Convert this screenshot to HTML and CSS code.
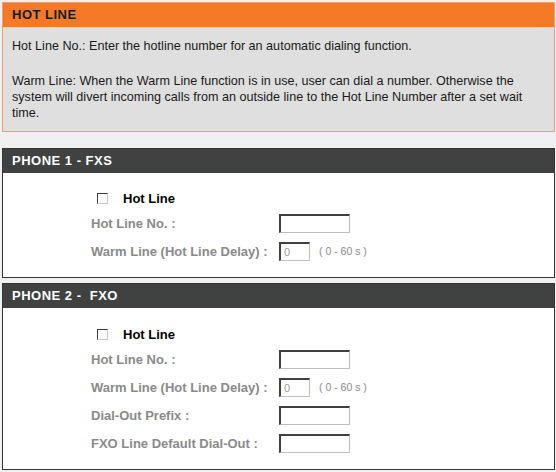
FILE: index.html
```html
<!DOCTYPE html>
<html>
<head>
<meta charset="utf-8">
<link rel="stylesheet" href="styles.css">
</head>
<body>
<div class="page">
  <section class="box info">
    <h2 class="head head-orange">HOT LINE</h2>
    <div class="info-body">
      <p>Hot Line No.: Enter the hotline number for an automatic dialing function.</p>
      <p>Warm Line: When the Warm Line function is in use, user can dial a number. Otherwise the system will divert incoming calls from an outside line to the Hot Line Number after a set wait time.</p>
    </div>
  </section>

  <section class="box phone phone1">
    <h2 class="head head-dark">PHONE 1 - FXS</h2>
    <div class="form">
      <div class="check-row"><span class="checkbox"></span><span class="check-label">Hot Line</span></div>
      <div class="row"><span class="label">Hot Line No. :</span><span class="field"><span class="input"></span></span></div>
      <div class="row"><span class="label">Warm Line (Hot Line Delay) :</span><span class="field"><span class="input small">0</span><span class="hint">( 0 - 60 s )</span></span></div>
    </div>
  </section>

  <section class="box phone phone2">
    <h2 class="head head-dark">PHONE 2 - &nbsp;FXO</h2>
    <div class="form">
      <div class="check-row"><span class="checkbox"></span><span class="check-label">Hot Line</span></div>
      <div class="row"><span class="label">Hot Line No. :</span><span class="field"><span class="input"></span></span></div>
      <div class="row"><span class="label">Warm Line (Hot Line Delay) :</span><span class="field"><span class="input small">0</span><span class="hint">( 0 - 60 s )</span></span></div>
      <div class="row"><span class="label">Dial-Out Prefix :</span><span class="field"><span class="input"></span></span></div>
      <div class="row"><span class="label">FXO Line Default Dial-Out :</span><span class="field"><span class="input"></span></span></div>
    </div>
  </section>
</div>
</body>
</html>
```

FILE: styles.css
```css
html, body {
  margin: 0;
  padding: 0;
  background: #f0f0f0;
}
body {
  font-family: "Liberation Sans", Arial, sans-serif;
}
.page {
  width: 553px;
  padding: 2px 0 0 2px;
  display: flex;
  flex-direction: column;
}
.box {
  box-sizing: border-box;
}
.info {
  border: 1px solid #f0a070;
  background: #dfdfdf;
  margin-bottom: 16px;
}
.head {
  margin: 0;
  height: 24px;
  line-height: 24px;
  font-size: 13px;
  font-weight: bold;
  padding-left: 9px;
  letter-spacing: 0.5px;
}
.head-orange {
  background: #f47a28;
  color: #1a1a1a;
}
.head-dark {
  background: #404242;
  color: #ffffff;
}
.info-body {
  padding: 11px 20px 10px 9px;
  font-size: 12.6px;
  line-height: 16px;
  color: #1a1a1a;
}
.info-body p {
  margin: 0;
}
.info-body p + p {
  margin-top: 19px;
}
.phone {
  border: 1px solid #333333;
  background: #ffffff;
}
.phone1 {
  margin-bottom: 5px;
}
.form {
  padding: 14px 0 12px 88px;
}
.phone2 .form {
  padding-top: 15px;
  padding-bottom: 12px;
}
.check-row {
  display: flex;
  align-items: center;
  height: 22px;
  padding-left: 6px;
}
.checkbox {
  box-sizing: border-box;
  width: 11px;
  height: 11px;
  border-top: 1px solid #404040;
  border-left: 1px solid #404040;
  border-right: 1px solid #c8c8c8;
  border-bottom: 1px solid #c8c8c8;
  background: #fff;
}
.check-label {
  margin-left: 15px;
  font-size: 13px;
  font-weight: bold;
  color: #000;
}
.row {
  display: grid;
  grid-template-columns: 188px 1fr;
  align-items: center;
  height: 28px;
}
.label {
  font-size: 13px;
  font-weight: bold;
  color: #8a8a8a;
}
.field {
  display: flex;
  align-items: center;
}
.input {
  box-sizing: border-box;
  width: 71px;
  height: 19px;
  border-top: 2px solid #404040;
  border-left: 2px solid #404040;
  border-right: 1px solid #c0c0c0;
  border-bottom: 1px solid #c0c0c0;
  background: #fff;
  font-size: 11px;
  line-height: 16px;
  color: #9a9a9a;
  padding-left: 3px;
}
.input.small {
  width: 31px;
}
.hint {
  margin-left: 9px;
  font-size: 10.5px;
  color: #8a8a8a;
}
```
